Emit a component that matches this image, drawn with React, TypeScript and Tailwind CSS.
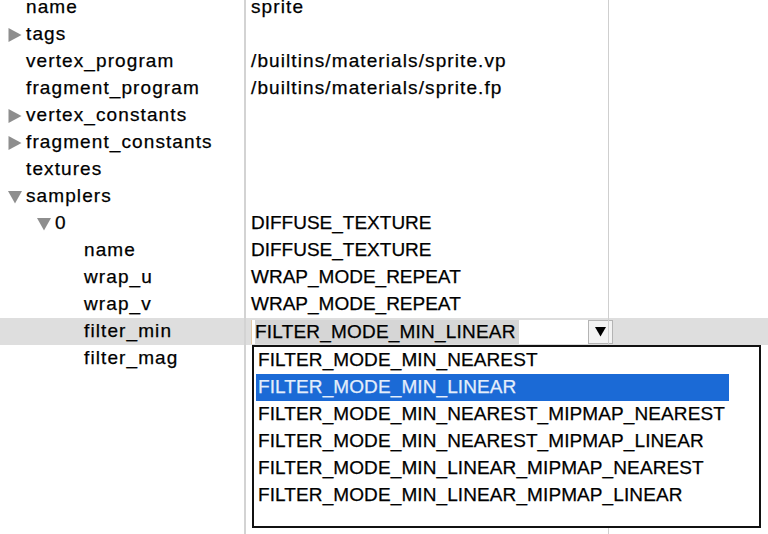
import type { ReactNode } from "react";

type Arrow = "right" | "down" | null;

type Row = {
  label: string;
  level?: number;
  arrow?: Arrow;
  value?: string;
  combo?: boolean;
};

const rows: Row[] = [
  { label: "name", value: "sprite" },
  { label: "tags", arrow: "right" },
  { label: "vertex_program", value: "/builtins/materials/sprite.vp" },
  { label: "fragment_program", value: "/builtins/materials/sprite.fp" },
  { label: "vertex_constants", arrow: "right" },
  { label: "fragment_constants", arrow: "right" },
  { label: "textures" },
  { label: "samplers", arrow: "down" },
  { label: "0", level: 1, arrow: "down", value: "DIFFUSE_TEXTURE" },
  { label: "name", level: 2, value: "DIFFUSE_TEXTURE" },
  { label: "wrap_u", level: 2, value: "WRAP_MODE_REPEAT" },
  { label: "wrap_v", level: 2, value: "WRAP_MODE_REPEAT" },
  { label: "filter_min", level: 2, combo: true },
  { label: "filter_mag", level: 2 },
  { label: "" },
  { label: "" },
  { label: "" },
  { label: "" },
  { label: "" },
  { label: "" },
];

const options = [
  "FILTER_MODE_MIN_NEAREST",
  "FILTER_MODE_MIN_LINEAR",
  "FILTER_MODE_MIN_NEAREST_MIPMAP_NEAREST",
  "FILTER_MODE_MIN_NEAREST_MIPMAP_LINEAR",
  "FILTER_MODE_MIN_LINEAR_MIPMAP_NEAREST",
  "FILTER_MODE_MIN_LINEAR_MIPMAP_LINEAR",
];

// the reference font has much wider lowercase than Arial, so widen those texts
const hasLower = (s: string) => /[a-z]/.test(s);

function Disclosure({ arrow }: { arrow: Arrow }) {
  if (!arrow) return <span className="w-[18px] shrink-0" />;
  return (
    <span className="flex w-[18px] shrink-0 items-center">
      <svg width="14" height="14" viewBox="0 0 14 14" aria-hidden="true">
        {arrow === "right" ? (
          <polygon points="0.5,0 13.5,7 0.5,14" fill="#8e8e8e" />
        ) : (
          <polygon points="0,1 14,1 7,13.5" fill="#8e8e8e" />
        )}
      </svg>
    </span>
  );
}

function ComboCell() {
  return (
    <div className="ml-[5px] flex h-[24px] items-center">
      <div className="flex h-full w-[337px] items-center border-l border-[#e2c9a6] bg-white pl-[3px]">
        <span className="bg-[#d6d6d6] pr-[3px] leading-[24px] tracking-[0.2px]">FILTER_MODE_MIN_LINEAR</span>
      </div>
      <div className="flex h-full w-[25px] shrink-0 items-center justify-center border border-[#b4b4b4] bg-[#f3f3f3]">
        <svg width="11" height="11" viewBox="0 0 11 11" aria-hidden="true">
          <polygon points="0,1 11,1 5.5,10.5" fill="#000" />
        </svg>
      </div>
    </div>
  );
}

function TreeRow({ row }: { row: Row }) {
  const level = row.level ?? 0;
  const highlighted = row.combo;
  let value: ReactNode = null;
  if (row.combo) value = <ComboCell />;
  else if (row.value)
    value = <span className={`pl-[5px] ${hasLower(row.value) ? "tracking-[1.1px]" : ""}`}>{row.value}</span>;

  return (
    <div className="flex h-[27px] items-center">
      <div className={`flex h-full w-full items-center ${highlighted ? "h-[24px] bg-[#dedede]" : ""}`}>
        <div className="flex w-[244px] shrink-0 items-center" style={{ paddingLeft: 8 + level * 29 }}>
          <Disclosure arrow={row.arrow ?? null} />
          <span className="tracking-[1.1px]">{row.label}</span>
        </div>
        <div className="flex h-[27px] w-[364px] shrink-0 items-center border-l-2 border-[#d3d3d3]">{value}</div>
        <div className="h-[27px] flex-1 border-l border-[#cfcfcf]" />
      </div>
    </div>
  );
}

export default function App() {
  return (
    <div
      className="relative h-[534px] w-[768px] overflow-hidden bg-white text-[19px] text-black [-webkit-text-stroke:0.25px]"
      style={{ fontFamily: '"Liberation Sans", Arial, sans-serif' }}
    >
      <div className="-mt-[6px] flex flex-col">
        {rows.map((row, i) => (
          <TreeRow key={i} row={row} />
        ))}
      </div>

      <div className="absolute left-[252px] top-[345px] h-[183px] w-[509px] border-2 border-[#111] bg-white pl-[2px]">
        {options.map((opt, i) => (
          <div
            key={opt}
            className={`flex h-[27px] w-[473px] items-center pl-[2px] tracking-[0.1px] ${
              i === 1 ? "bg-[#1b6ad6] text-[#e4eefb]" : ""
            }`}
          >
            {opt}
          </div>
        ))}
      </div>
    </div>
  );
}
